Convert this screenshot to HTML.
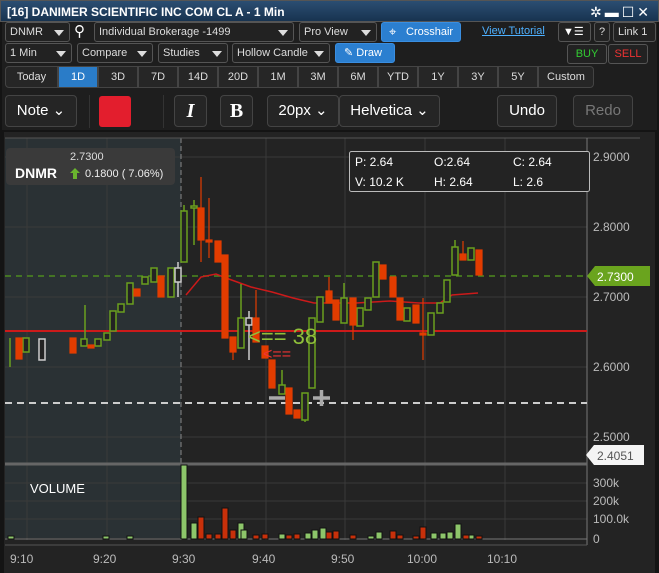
<!DOCTYPE html>
<html><head><meta charset="utf-8"><style>
*{margin:0;padding:0;box-sizing:border-box}
body{width:659px;height:573px;background:#141414;font-family:"Liberation Sans",sans-serif;overflow:hidden;position:relative;color:#ddd}
.a{position:absolute}
.title{left:0;top:0;width:659px;height:22px;background:linear-gradient(#2b4e72,#183350);color:#fff;font-size:12px;font-weight:bold;line-height:22px;padding-left:6px;border:1px solid #555}
.tb{background:#1e1e1e;left:2px;top:22px;width:655px;height:108px}
.btn{position:absolute;background:#222;border:1px solid #555;border-radius:3px;color:#ddd;font-size:11px;line-height:18px;padding-left:4px;height:20px;white-space:nowrap;overflow:hidden}
.dd:after{content:"";position:absolute;right:5px;top:7px;border-left:5px solid transparent;border-right:5px solid transparent;border-top:6px solid #ddd}
.blue{background:#2b7fd0;border-color:#3a8ee0;color:#fff}
.rng{position:absolute;top:66px;height:22px;background:#262626;border:1px solid #444;color:#ddd;font-size:11px;line-height:20px;text-align:center}
.big{position:absolute;top:95px;height:32px;background:#252525;border:1px solid #444;border-radius:4px;color:#fff;font-size:15px;line-height:30px;text-align:center}
</style></head><body>
<div class="a title">[16] DANIMER SCIENTIFIC INC COM CL A - 1 Min
<span style="position:absolute;right:6px;top:0;font-size:14px;letter-spacing:3px;font-weight:normal">✲▬☐✕</span></div>
<div class="a tb"></div>
<div class="btn dd" style="left:5px;top:22px;width:65px">DNMR</div>
<div class="a" style="left:74px;top:22px;font-size:15px;color:#fff">⚲</div>
<div class="btn dd" style="left:94px;top:22px;width:200px">Individual Brokerage -1499</div>
<div class="btn dd" style="left:299px;top:22px;width:78px">Pro View</div>
<div class="btn blue" style="left:381px;top:22px;width:80px;padding-left:24px">Crosshair<span style="position:absolute;left:7px;top:0;font-size:13px">⌖</span></div>
<div class="a" style="left:482px;top:25px;font-size:11px;color:#4db0ff;text-decoration:underline">View Tutorial</div>
<div class="btn" style="left:558px;top:22px;width:33px;color:#fff">▼☰</div>
<div class="btn" style="left:594px;top:22px;width:16px">?</div>
<div class="btn" style="left:613px;top:22px;width:43px">Link 1</div>
<div class="btn dd" style="left:5px;top:43px;width:67px">1 Min</div>
<div class="btn dd" style="left:77px;top:43px;width:76px">Compare</div>
<div class="btn dd" style="left:158px;top:43px;width:70px">Studies</div>
<div class="btn dd" style="left:232px;top:43px;width:98px">Hollow Candle</div>
<div class="btn blue" style="left:335px;top:43px;width:60px;padding-left:8px">✎ Draw</div>
<div class="btn" style="left:567px;top:44px;width:40px;color:#3c3;text-align:center;padding:0">BUY</div>
<div class="btn" style="left:608px;top:44px;width:40px;color:#e33;text-align:center;padding:0">SELL</div>
<div class="rng" style="left:5px;width:53px;border-radius:4px 0 0 4px">Today</div>
<div class="rng" style="left:58px;width:40px;background:#2a7cc8;color:#fff">1D</div>
<div class="rng" style="left:98px;width:40px">3D</div>
<div class="rng" style="left:138px;width:40px">7D</div>
<div class="rng" style="left:178px;width:40px">14D</div>
<div class="rng" style="left:218px;width:40px">20D</div>
<div class="rng" style="left:258px;width:40px">1M</div>
<div class="rng" style="left:298px;width:40px">3M</div>
<div class="rng" style="left:338px;width:40px">6M</div>
<div class="rng" style="left:378px;width:40px">YTD</div>
<div class="rng" style="left:418px;width:40px">1Y</div>
<div class="rng" style="left:458px;width:40px">3Y</div>
<div class="rng" style="left:498px;width:40px">5Y</div>
<div class="rng" style="left:538px;width:56px;border-radius:0 4px 4px 0">Custom</div>
<div class="big" style="left:5px;width:72px">Note ⌄</div>
<div class="a" style="left:89px;top:95px;width:1px;height:33px;background:#333"></div>
<div class="a" style="left:99px;top:96px;width:32px;height:31px;background:#e31e2d;border-radius:3px"></div>
<div class="a" style="left:163px;top:95px;width:1px;height:33px;background:#333"></div>
<div class="big" style="left:174px;width:33px;font-family:'Liberation Serif',serif;font-style:italic;font-weight:bold;font-size:20px">I</div>
<div class="big" style="left:220px;width:33px;font-family:'Liberation Serif',serif;font-weight:bold;font-size:20px">B</div>
<div class="big" style="left:267px;width:72px">20px ⌄</div>
<div class="big" style="left:339px;width:101px">Helvetica ⌄</div>
<div class="big" style="left:497px;width:60px">Undo</div>
<div class="big" style="left:573px;width:60px;color:#777">Redo</div>

<svg class="a" style="left:0;top:132px" width="659" height="441" viewBox="0 132 659 441">
<rect x="4" y="132" width="651" height="441" fill="#232323"/>
<rect x="5" y="138" width="176" height="400" fill="#2a3134"/>
<g stroke="#3a3a3a" stroke-width="1">
<path d="M5 157H587M5 227H587M5 297H587M5 367H587M5 437H587M5 483H587M5 501H587M5 519H587"/>
<path d="M27 138V540M107 138V540M266 138V540M345 138V540M425 138V540M505 138V540"/>
</g>
<path d="M181 138V540" stroke="#888" stroke-dasharray="5,3"/>
<path d="M5 138H640" stroke="#555"/>
<path d="M587 138V545" stroke="#777"/>
<path d="M5 464H587" stroke="#666" stroke-width="3"/>
<path d="M5 539H587" stroke="#777"/>
<path d="M5 331H587" stroke="#cc1a1a" stroke-width="2"/>
<path d="M5 276H587" stroke="#4d8a1e" stroke-width="1.5" stroke-dasharray="6,5"/>
<path d="M5 403H587" stroke="#ccc" stroke-width="2" stroke-dasharray="7,5"/>
<polyline fill="none" stroke="#cc1a1a" stroke-width="1.5" points="186,295 201,277 216,274 226,278 251,287 272,292 293,298 314,303 356,303 390,301 419,303 440,303 452,295 478,293"/>
<g stroke="#6aa01e" stroke-width="1.5" fill="#232323">
<path d="M10 338V367M85 305V340M184 205V262M194 200V245M241 284V348M282 370V394M305 393V422M312 318V388M320 298V322M344 283V323M360 308V326M368 298V310M376 262V297M407 308V321M431 313V335M440 303V313M447 280V302M455 240V275M471 248V260"/>
<rect x="23" y="338" width="6" height="14"/><rect x="81" y="339" width="6" height="7"/><rect x="95" y="339" width="6" height="7"/><rect x="104" y="333" width="6" height="7"/><rect x="110" y="311" width="6" height="20"/><rect x="118" y="304" width="6" height="8"/><rect x="127" y="283" width="6" height="21"/><rect x="142" y="277" width="6" height="7"/><rect x="151" y="268" width="6" height="14"/><rect x="168" y="268" width="6" height="29"/><rect x="181" y="211" width="6" height="51"/><rect x="191" y="206" width="6" height="2"/><rect x="238" y="318" width="6" height="30"/><rect x="279" y="385" width="6" height="9"/><rect x="302" y="393" width="6" height="27"/><rect x="309" y="318" width="6" height="70"/><rect x="317" y="297" width="6" height="25"/><rect x="341" y="298" width="6" height="25"/><rect x="357" y="308" width="6" height="18"/><rect x="365" y="298" width="6" height="12"/><rect x="373" y="262" width="6" height="35"/><rect x="404" y="308" width="6" height="13"/><rect x="428" y="313" width="6" height="22"/><rect x="437" y="303" width="6" height="10"/><rect x="444" y="280" width="6" height="22"/><rect x="452" y="247" width="6" height="28"/><rect x="468" y="248" width="6" height="12"/>
</g>
<g stroke="#ccc" stroke-width="1.5" fill="#232323"><path d="M178 262V297M249 311V360"/><rect x="39" y="339" width="6" height="21"/><rect x="175" y="268" width="6" height="14"/><rect x="246" y="318" width="6" height="7"/></g>
<g stroke="#e23c00" stroke-width="1.2" fill="#e23c00">
<path d="M201 177V262M209 198V258M233 337V360M256 290V342M329 277V303M353 298V340M423 298V360M463 241V260"/>
<rect x="16" y="338" width="6" height="21"/><rect x="70" y="338" width="6" height="15"/><rect x="88" y="345" width="6" height="3"/><rect x="134" y="289" width="6" height="7"/><rect x="158" y="276" width="6" height="21"/><rect x="198" y="208" width="6" height="32"/><rect x="206" y="240" width="6" height="2"/><rect x="215" y="241" width="6" height="21"/><rect x="222" y="255" width="6" height="83"/><rect x="230" y="337" width="6" height="15"/><rect x="253" y="318" width="6" height="24"/><rect x="262" y="346" width="6" height="12"/><rect x="269" y="360" width="6" height="28"/><rect x="286" y="388" width="6" height="26"/><rect x="294" y="410" width="6" height="8"/><rect x="326" y="291" width="6" height="12"/><rect x="333" y="300" width="6" height="20"/><rect x="350" y="298" width="6" height="27"/><rect x="380" y="265" width="6" height="14"/><rect x="390" y="277" width="6" height="20"/><rect x="397" y="298" width="6" height="22"/><rect x="413" y="305" width="6" height="18"/><rect x="420" y="333" width="6" height="2"/><rect x="460" y="254" width="6" height="6"/><rect x="476" y="250" width="6" height="25"/>
</g>
<text x="248" y="344" font-size="22" fill="#8fbf3a" font-family="Liberation Sans">&lt;== 38</text>
<text x="263" y="359" font-size="16" fill="#e33" font-family="Liberation Sans">&lt;==</text>
<path d="M269 398H285M313 398H330M321.5 390V406" stroke="#aaa" stroke-width="3.5"/>
<g stroke="#111" stroke-width="1">
<g fill="#8dc66a"><rect x="181" y="465" width="6" height="74"/><rect x="191" y="523" width="6" height="16"/><rect x="238" y="523" width="6" height="16"/><rect x="241" y="530" width="6" height="9"/><rect x="279" y="534" width="6" height="5"/><rect x="305" y="533" width="6" height="6"/><rect x="312" y="530" width="6" height="9"/><rect x="320" y="528" width="6" height="11"/><rect x="376" y="532" width="6" height="7"/><rect x="368" y="536" width="6" height="3"/><rect x="431" y="533" width="6" height="6"/><rect x="440" y="533" width="6" height="6"/><rect x="447" y="532" width="6" height="7"/><rect x="455" y="524" width="6" height="15"/><rect x="468" y="535" width="6" height="4"/><rect x="8" y="536" width="6" height="3"/><rect x="103" y="536" width="6" height="3"/><rect x="127" y="536" width="6" height="3"/></g>
<g fill="#c8300a"><rect x="198" y="517" width="6" height="22"/><rect x="206" y="534" width="6" height="5"/><rect x="215" y="534" width="6" height="5"/><rect x="222" y="508" width="6" height="31"/><rect x="230" y="530" width="6" height="9"/><rect x="253" y="535" width="6" height="4"/><rect x="262" y="534" width="6" height="5"/><rect x="286" y="535" width="6" height="4"/><rect x="294" y="534" width="6" height="5"/><rect x="326" y="532" width="6" height="7"/><rect x="333" y="531" width="6" height="8"/><rect x="350" y="535" width="6" height="4"/><rect x="390" y="531" width="6" height="8"/><rect x="397" y="535" width="6" height="4"/><rect x="413" y="536" width="6" height="3"/><rect x="420" y="527" width="6" height="12"/><rect x="463" y="535" width="6" height="4"/><rect x="476" y="536" width="6" height="3"/></g>
</g>
<g font-family="Liberation Sans" font-size="12" fill="#bbb">
<text x="593" y="161">2.9000</text><text x="593" y="231">2.8000</text><text x="593" y="301">2.7000</text><text x="593" y="371">2.6000</text><text x="593" y="441">2.5000</text>
<text x="593" y="487">300k</text><text x="593" y="505">200k</text><text x="593" y="523">100.0k</text><text x="593" y="543">0</text>
<text x="10" y="563">9:10</text><text x="93" y="563">9:20</text><text x="172" y="563">9:30</text><text x="252" y="563">9:40</text><text x="331" y="563">9:50</text><text x="407" y="563">10:00</text><text x="487" y="563">10:10</text>
</g>
<path d="M587 276L595 266H650V286H595Z" fill="#6aa41e"/>
<text x="597" y="281" font-size="12" fill="#fff" font-family="Liberation Sans">2.7300</text>
<path d="M586 455L594 445H644V465H594Z" fill="#f4f4f4"/>
<text x="597" y="460" font-size="12" fill="#555" font-family="Liberation Sans">2.4051</text>
<path d="M5 545H587" stroke="#555"/>
<rect x="6" y="148" width="169" height="37" rx="4" fill="#3a3a3a"/>
<text x="70" y="160" font-size="11" fill="#ddd" font-family="Liberation Sans">2.7300</text>
<text x="15" y="178" font-size="14" font-weight="bold" fill="#fff" font-family="Liberation Sans">DNMR</text>
<path d="M75 168L70 173H73V179H77V173H80Z" fill="#6ab52e"/>
<text x="85" y="177" font-size="11" fill="#eee" font-family="Liberation Sans">0.1800 ( 7.06%)</text>
<rect x="349.5" y="151.5" width="240" height="40" rx="2" fill="#232323" stroke="#bbb"/>
<g font-size="12" fill="#fff" font-family="Liberation Sans"><text x="355" y="166">P: 2.64</text><text x="434" y="166">O:2.64</text><text x="513" y="166">C: 2.64</text><text x="355" y="186">V: 10.2 K</text><text x="434" y="186">H: 2.64</text><text x="513" y="186">L: 2.6</text></g>
<text x="30" y="493" font-size="13" fill="#fff" font-family="Liberation Sans">VOLUME</text>
</svg>
</body></html>
